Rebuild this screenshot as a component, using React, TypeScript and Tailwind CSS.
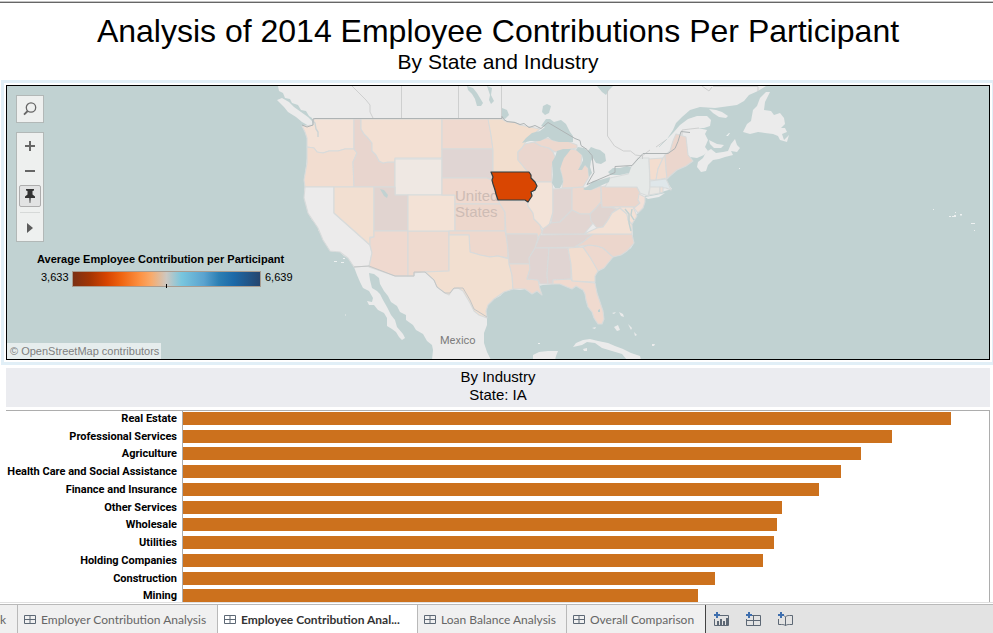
import React from "react";

type Region = { name: string; fill: string; points: string };

const LAND = "#ebebeb";
const WATER = "#c1d2d2";

const mainland =
  "278,86 279,91 283,93 285,98 290,99 292,103 298,105 301,110 306,111 309,116 312,118 314,123 311,125 302,126 305,132 307,138 307,147 307,158 306,167 305,174 304,180 305,187 304,191 304,198 308,206 308,213 312,220 318,225 318,230 321,234 323,240 330,247 330,251 335,252 340,252 344,256 348,258 352,262 354,267 357,275 360,282 363,288 369,291 373,298 372,302 367,301 369,305 374,305 378,310 384,313 387,318 387,326 392,329 396,332 399,337 402,340 405,338 403,334 397,327 395,320 391,315 387,307 383,300 380,294 377,291 372,288 370,280 369,273 374,274 379,278 380,284 384,291 388,296 391,302 397,306 400,312 406,315 406,320 413,325 416,330 423,334 427,341 432,345 433,350 432,360 491,360 487,352 484,343 484,333 487,325 487,318 486,311 488,305 494,299 500,296 504,292 513,289 520,290 525,289 528,291 532,294 537,291 542,295 540,289 538,286 543,285 553,284 560,284 567,287 572,289 576,286 583,290 585,294 586,300 588,307 592,312 594,318 598,324 602,324 604,319 603,311 600,302 597,293 595,283 595,276 598,271 604,268 609,261 614,256 621,255 627,251 631,248 634,243 632,238 633,235 632,225 633,218 638,213 643,208 645,200 645,196 656,194 665,191 672,189 669,185 666,183 666,179 670,176 677,170 686,166 693,161 690,157 697,158 704,155 708,151 705,147 708,140 705,134 707,130 698,128 704,128 710,126 711,120 707,116 697,116 688,119 680,125 673,133 667,139 673,130 676,123 682,117 690,110 700,107 715,108 737,105 744,101 749,95 758,91 766,86";

const islands = [
  "277,100 282,98 289,102 294,107 301,112 308,117 312,121 313,125 309,126 302,122 296,117 288,112 284,107",
  "697,167 698,162 703,158 706,152 711,149 716,153 723,152 728,151 731,144 735,139 737,145 740,148 737,152 731,151 733,155 725,157 719,159 713,160 708,165 706,171 701,172",
  "709,140 713,142 717,144 724,145 721,148 714,148 710,144",
  "709,109 716,110 722,112 728,116 726,118 719,117 713,113",
  "743,132 747,124 751,121 753,110 757,106 760,98 766,92 770,92 765,102 764,110 771,111 774,115 780,113 784,118 785,124 781,128 785,128 787,132 782,134 784,140 789,135 787,142 780,140 778,136 773,134 765,133 758,132 750,134",
  "645,197 656,195 665,193 659,197 648,199",
  "573,347 576,343 583,340 590,339 598,341 608,343 615,346 623,349 631,353 640,356 641,360 627,360 622,354 612,351 602,348 595,343 587,342 582,345",
  "533,360 533,355 539,352 548,351 558,351 556,356 555,360",
  "583,349 587,348 587,351 584,351",
  "614,327 618,325 620,330 617,331",
  "612,313 616,312 614,314",
  "619,312 623,314 624,317 621,316",
  "628,324 632,328 631,330",
  "634,332 637,335 635,336",
  "652,344 655,344 654,346 652,346",
  "345,314 346,315 345,316",
  "592,328 596,327 595,329",
];

const states: Region[] = [
  { name: "Washington", fill: "#f3e2d7", points: "302,126 313,125 314,119 354,119 354,149 345,149 338,151 329,151 323,153 317,152 314,148 307,147 307,138 305,132" },
  { name: "Oregon", fill: "#f2ddd0", points: "307,147 314,148 317,152 323,153 329,151 338,151 345,149 354,149 357,153 353,162 354,187 305,187 304,180 307,163" },
  { name: "California", fill: "#ecebeb", points: "305,187 334,187 334,213 370,245 372,253 369,266 354,267 348,258 340,252 330,251 323,240 318,228 308,213 304,198" },
  { name: "Idaho", fill: "#e8d5ce", points: "354,119 361,119 361,129 364,134 368,138 372,143 372,151 376,155 379,161 383,163 388,162 395,162 395,187 354,187 353,162 357,153 354,149" },
  { name: "Montana", fill: "#f3e0d3", points: "361,119 442,119 442,158 395,158 395,162 388,162 383,163 379,161 376,155 372,151 372,143 368,138 364,134 361,129" },
  { name: "Wyoming", fill: "#efe8e3", points: "395,159 442,159 442,195 395,195" },
  { name: "Nevada", fill: "#f2dfd1", points: "334,187 374,187 374,237 370,237 370,245 334,213" },
  { name: "Utah", fill: "#e1d4d0", points: "374,187 395,187 395,195 408,195 408,231 374,231" },
  { name: "Arizona", fill: "#efd9cf", points: "374,231 408,231 408,276 395,276 369,267 372,253 370,245 370,238 374,237" },
  { name: "New Mexico", fill: "#efdacf", points: "408,231 449,231 449,271 422,272 414,273 414,276 408,276" },
  { name: "Colorado", fill: "#f3e2d6", points: "408,195 455,195 455,231 408,231" },
  { name: "North Dakota", fill: "#efd9cf", points: "442,119 489,119 491,135 493,149 442,149" },
  { name: "South Dakota", fill: "#e0d5d3", points: "442,149 493,149 493,173 492,180 487,178 442,178" },
  { name: "Nebraska", fill: "#efd9cf", points: "442,178 487,178 492,180 496,190 500,204 455,204 455,195 442,195" },
  { name: "Kansas", fill: "#edd7cc", points: "455,204 500,204 505,212 505,231 455,231" },
  { name: "Oklahoma", fill: "#eed8cd", points: "449,231 505,231 508,245 508,258 498,256 490,257 480,255 470,252 469,235 449,235" },
  { name: "Texas", fill: "#f2dfd0", points: "449,235 469,235 470,252 480,255 490,257 498,256 509,259 512,275 513,289 504,292 494,299 488,305 486,311 487,318 479,315 474,311 470,303 463,291 458,288 453,289 449,295 445,293 437,287 434,280 425,272 449,271" },
  { name: "Minnesota", fill: "#f2dece", points: "488,119 502,119 507,122 514,122 520,125 530,127 540,129 531,136 525,143 522,148 518,152 518,160 523,166 528,172 493,172 493,150 491,135" },
  { name: "Wisconsin", fill: "#ead6ce", points: "525,144 534,142 541,146 549,148 553,152 555,157 552,167 552,182 534,182 530,176 528,172 523,166 518,160 518,152 522,148" },
  { name: "Upper Michigan", fill: "#edd8ce", points: "534,142 547,138 555,141 567,141 577,145 577,148 565,150 555,152 549,148 541,146" },
  { name: "Michigan", fill: "#edd8ce", points: "570,149 577,150 582,155 581,164 580,168 585,165 588,168 589,177 583,187 562,188 563,180 560,168 563,157" },
  { name: "Missouri", fill: "#eed8cd", points: "498,200 527,201 528,206 533,213 534,219 540,225 542,232 538,238 537,234 506,234 505,212 500,204" },
  { name: "Illinois", fill: "#f3e3d8", points: "530,199 537,186 534,182 552,182 553,190 553,212 550,222 548,229 543,229 540,225 534,219 533,213 528,206 528,202" },
  { name: "Indiana", fill: "#e1d5d2", points: "553,189 572,188 572,210 565,217 560,222 551,223 553,212" },
  { name: "Ohio", fill: "#edd8ce", points: "572,188 583,187 590,190 601,186 601,202 596,208 590,214 580,214 572,210" },
  { name: "Kentucky", fill: "#e2d5d1", points: "542,234 543,229 551,223 560,222 565,217 572,210 580,214 590,214 594,222 584,234" },
  { name: "West Virginia", fill: "#e0d4d0", points: "601,202 602,207 610,207 617,209 612,213 608,220 603,227 597,228 591,221 590,214 596,208" },
  { name: "Pennsylvania", fill: "#ecd6cc", points: "601,187 605,186 637,187 640,193 638,200 640,203 636,207 602,207" },
  { name: "Tennessee", fill: "#e0d4d1", points: "540,235 593,234 583,242 575,247 535,248" },
  { name: "Arkansas", fill: "#e0d4d0", points: "506,234 537,234 538,238 535,248 529,258 530,264 509,264 508,250" },
  { name: "Louisiana", fill: "#eed8cd", points: "509,264 530,264 530,269 527,279 538,280 540,289 542,295 537,291 532,294 528,291 525,289 513,289 512,275" },
  { name: "Mississippi", fill: "#e0d4d2", points: "535,248 549,248 547,275 548,284 540,284 538,280 527,279 530,269 529,258" },
  { name: "Alabama", fill: "#e0d4d2", points: "549,248 568,248 571,264 571,279 553,280 553,284 548,284 547,275" },
  { name: "Georgia", fill: "#f2ddcf", points: "568,248 583,247 590,257 597,268 598,271 595,276 595,282 572,281 571,264" },
  { name: "Florida", fill: "#f0dacf", points: "553,280 571,279 572,281 595,283 597,293 600,302 603,311 604,319 602,324 598,324 594,318 592,312 588,307 586,300 585,294 583,290 576,286 572,289 567,287 560,284 553,284" },
  { name: "South Carolina", fill: "#eed8ce", points: "583,247 589,245 597,246 603,248 613,257 604,268 598,271 590,257" },
  { name: "North Carolina", fill: "#ecd6cc", points: "575,247 583,242 593,234 632,234 634,243 627,251 621,255 613,257 603,248 597,246 589,245" },
  { name: "Virginia", fill: "#f3e1d5", points: "584,234 597,228 603,227 608,220 612,213 620,208 627,214 628,220 632,225 632,234" },
  { name: "Maryland", fill: "#f3e1d6", points: "610,207 633,207 637,216 632,224 628,220 627,214 620,208 617,209" },
  { name: "New Jersey", fill: "#f3e1d8", points: "639,194 645,197 645,202 643,208 638,213 634,208 640,203 638,200" },
  { name: "New York", fill: "#e6e9e8", points: "605,187 610,178 628,174 631,167 638,158 649,158 650,187 648,196 640,193 637,187" },
  { name: "Vermont", fill: "#f3ddcf", points: "649,159 663,158 658,169 656,180 650,180" },
  { name: "New Hampshire", fill: "#f1ddd1", points: "663,158 665,155 666,168 667,178 656,180 658,169" },
  { name: "Maine", fill: "#ebd6cd", points: "665,155 670,151 673,141 676,134 680,135 686,137 688,155 693,161 686,166 677,170 670,176 667,179 666,168" },
  { name: "Massachusetts", fill: "#dfe7ea", points: "650,181 666,179 668,183 671,190 666,188 650,187" },
  { name: "Connecticut", fill: "#e9e7e3", points: "650,187 660,187 660,193 649,195" },
  { name: "Rhode Island", fill: "#f0e0d6", points: "660,187 663,187 663,192 660,193" },
];

const lakes = [
  "522,143 526,138 532,133 540,131 545,127 541,126 546,119 550,119 554,122 561,120 566,124 570,132 573,136 573,142 566,142 559,142 552,140 548,137 540,141 530,141",
  "552,162 555,157 557,151 563,149 571,149 568,153 564,158 562,163 560,169 562,176 563,182 560,188 555,188 552,183 553,175",
  "578,147 584,148 588,151 591,147 596,149 600,150 605,154 606,161 601,164 596,163 593,158 591,161 590,167 592,173 589,177 588,168 585,165 582,170 578,170 581,165 583,160 582,155 576,150",
  "583,189 588,186 593,181 600,180 610,177 609,182 600,186 591,190 585,190",
  "608,172 613,168 620,168 627,166 631,167 629,173 620,175 611,175",
  "467,86 473,88 477,93 480,98 483,103 481,106 477,106 475,99 472,94 468,90",
  "487,86 492,88 491,95 494,101 491,104 489,100 490,95",
  "502,108 507,110 509,115 505,119 502,118",
  "543,106 547,104 551,106 549,113 545,115 542,112",
  "597,86 613,86 609,90 606,95 602,92",
  "380,189 384,190 388,195 387,198 384,196",
  "598,310 600,309 600,312 598,312",
];

const contributions = [
  { industry: "Real Estate", value: 768 },
  { industry: "Professional Services", value: 709 },
  { industry: "Agriculture", value: 678 },
  { industry: "Health Care and Social Assistance", value: 658 },
  { industry: "Finance and Insurance", value: 636 },
  { industry: "Other Services", value: 599 },
  { industry: "Wholesale", value: 594 },
  { industry: "Utilities", value: 591 },
  { industry: "Holding Companies", value: 580 },
  { industry: "Construction", value: 532 },
  { industry: "Mining", value: 515 },
];
const AXIS_MAX = 806;

function ContributionMap() {
  return (
    <svg
      className="block h-full w-full"
      viewBox="7 86 982 273"
      preserveAspectRatio="xMidYMid slice"
      role="img"
      aria-label="Map of average employee contribution by state"
    >
      <rect x="-500" y="0" width="2000" height="500" fill={WATER} />
      <polygon points={mainland} fill={LAND} />
      {islands.map((p) => (
        <polygon key={p} points={p} fill={LAND} />
      ))}
      <g stroke="#d8dbdb" strokeWidth="1.1" strokeLinejoin="round">
        {states.map((s) => (
          <polygon key={s.name} points={s.points} fill={s.fill} />
        ))}
      </g>
      {lakes.map((p) => (
        <polygon key={p} points={p} fill={WATER} />
      ))}
      <g fill="none" stroke={WATER} strokeWidth="1.4">
        <path d="M312 120l3 3 1 6 2 3v5" stroke="#ccd4d5" />
        <path d="M625 209l4 5v9l2 8M632 209l-1 6 3 5" />
        <path d="M667 139l-8 8" strokeWidth="0.8" />
      </g>
      <g fill="none" stroke="#c6c8c8" strokeWidth="0.8">
        <path d="M352 86l5 5 5 5 4 4 4 5v7l3 6M401.500 86v32M458.500 86v32M501.500 86v32" />
        <path d="M607.500 90v46l7 10 9 5 7 0 5 4 7 1 0 3M713 86.500h45v5M702 86l7 5 3-4" />
        <path d="M642 156l8-6M656 147l10-7M682 135v-5l8-1 9-1" />
      </g>
      <g fill="none" stroke="#aeb3b4" strokeWidth="1">
        <path d="M302 125l5 2 6-2v-6l2-0.500h187v-2l2 3 3 2 8 1 5 2 4-1 5 4 6-2 6 3 7-6 27 16 5 2 1 5 6 4 5 6 2 17-7 12 28-12v-6l17-1 11-12h25l7-5 3-7 3-10 9 1" />
        <path d="M354 267l15-1 26 10h19v-4h11l9 8 3 7 8 6 5 0 4-5h9l7 12 4 9 13 8" stroke="#c4c6c6" />
      </g>
      <g fill="#eef1f1">
        <path d="M949 216h2v1h-2zM952 216h4v1h-4zM954 215h2v1h-2zM960 214h2v1.500h-2zM955 212h1v1h-1zM971 223h4v1h-4zM933 209h1v1h-1zM974 230h1v1h-1zM739 168h1v1h-1zM334 261h3v1h-3zM341 262h3v1h-3zM343 258h2v1h-2z" />
        <path d="M726 136h2l2-3h-1zM506 341l2 1zM538 343h2v1h-2zM611 334l2 2zM640 338l2 3z" />
      </g>
      <g fill="#cdbcb5" fontFamily="'Liberation Sans', Arial, sans-serif" fontSize="15">
        <text x="455" y="201">United</text>
        <text x="455" y="217">States</text>
      </g>
      <text x="440" y="344" fontFamily="Roboto, 'Liberation Sans', sans-serif" fontSize="11" fill="#7d7d7d">
        Mexico
      </text>
      <polygon
        points="491,172 529,172 531,175 531,178 535,182 537,186 535,190 531,192 532,196 530,199 528,202 525,200 498,200 496,194 495,190 493,184 492,180 493,177"
        fill="#d94602"
        stroke="#333c3f"
        strokeWidth="1.200"
        strokeLinejoin="round"
      />
    </svg>
  );
}

function SearchIcon() {
  return (
    <svg width="14" height="14" viewBox="0 0 14 14" fill="none" stroke="#666" strokeWidth="1.300">
      <circle cx="8" cy="5.500" r="4.700" />
      <path d="M4.700 9L1 12.700" strokeWidth="1.800" />
    </svg>
  );
}

function PinIcon() {
  return (
    <svg width="10" height="14" viewBox="0 0 10 14" fill="#333">
      <path d="M1 0h8v1.500L7.500 2v3.500L10 7.500V9H5.700L5.300 14h-.6L4.300 9H0V7.500l2.500-2V2L1 1.500z" />
    </svg>
  );
}

function MapTools() {
  return (
    <div className="absolute left-[9px] top-[9px] flex w-7 flex-col gap-[9px]">
      <button aria-label="Search" className="flex h-7 items-center justify-center border border-[#b2b8b7] bg-[#eef0ef]">
        <SearchIcon />
      </button>
      <div className="flex h-[110px] flex-col items-center border border-[#b2b8b7] bg-[#eef0ef]">
        <button aria-label="Zoom in" className="flex h-[26px] w-full items-center justify-center">
          <svg width="10" height="10" viewBox="0 0 10 10" fill="#666">
            <path d="M4 0h2v4h4v2H6v4H4V6H0V4h4z" />
          </svg>
        </button>
        <button aria-label="Zoom out" className="flex h-6 w-full items-center justify-center">
          <svg width="10" height="2" viewBox="0 0 10 2" fill="#666">
            <path d="M0 0h10v2H0z" />
          </svg>
        </button>
        <button
          aria-label="Pin map"
          className="mt-0.5 flex h-[22px] w-[22px] shrink-0 items-center justify-center rounded-[2px] border border-[#adadad] bg-[#e2e3e3]"
        >
          <PinIcon />
        </button>
        <div className="mt-[5px] h-px w-5 shrink-0 bg-[#d6d9d8]" />
        <button aria-label="More map tools" className="flex w-full flex-1 items-center justify-center pt-px">
          <svg width="6" height="10" viewBox="0 0 6 10" fill="#5c5c5c">
            <path d="M0 0l6 5-6 5z" />
          </svg>
        </button>
      </div>
    </div>
  );
}

function ColorLegend() {
  return (
    <div className="absolute left-[30px] top-[166px] text-[11px] leading-[14px] text-black">
      <div className="font-bold">Average Employee Contribution per Participant</div>
      <div className="mt-1 flex items-start gap-1 pl-1">
        <span className="w-7">3,633</span>
        <div className="relative -ml-px mt-px h-4 w-[189px] border border-[#a99c90] bg-[linear-gradient(to_right,#7b3014,#a33403_9%,#d74401_18%,#f06511_26%,#fd9243_36%,#f8ab6c_42%,#ccc8c2_50%,#79c6de_58%,#5ba3cf_70%,#2c7fb4_78%,#1c69a8_86%,#26456e)]">
          <div className="absolute left-[93px] top-3 h-1 w-px bg-black" />
        </div>
        <span>6,639</span>
      </div>
    </div>
  );
}

function DashboardIcon() {
  return (
    <svg className="shrink-0" width="12" height="9" viewBox="0 0 12 9" fill="none" stroke="#5d6875">
      <path d="M.5.5h11v8H.5zM6 .5v8M.5 4.500h11" />
    </svg>
  );
}

function SheetTab({
  label,
  width,
  active = false,
  last = false,
}: {
  label: string;
  width: string;
  active?: boolean;
  last?: boolean;
}) {
  return (
    <button
      role="tab"
      aria-selected={active}
      className={
        "flex shrink-0 items-center gap-[5px] border-r pt-px pl-1.5 text-left whitespace-nowrap " +
        width +
        (last ? " border-[#444]" : " border-[#b9b9b9]") +
        (active ? " bg-white font-bold text-[#333]" : " bg-[#f0f0f0] text-[#666]")
      }
    >
      <DashboardIcon />
      {label}
    </button>
  );
}

function NewSheetButtons() {
  return (
    <div className="flex items-center gap-4 pl-[7px]">
      <button aria-label="New worksheet">
        <svg width="16" height="14" viewBox="0 0 16 14" fill="none" stroke="#5d6875">
          <path d="M1.500 7v6.500h14v-10H7" />
          <path d="M5 13V9M8 13V7M11 13V9M14 13V6" strokeWidth="2" />
          <path d="M4 0v6M1 3h6" stroke="#3f6fae" strokeWidth="2" />
        </svg>
      </button>
      <button aria-label="New dashboard">
        <svg width="16" height="14" viewBox="0 0 16 14" fill="none" stroke="#5d6875">
          <path d="M1.500 7v6.500h14v-10H7M8.500 3.500v10M1.500 8.500h14" />
          <path d="M4 0v6M1 3h6" stroke="#3f6fae" strokeWidth="2" />
        </svg>
      </button>
      <button aria-label="New story">
        <svg width="16" height="14" viewBox="0 0 16 14" fill="none" stroke="#5d6875">
          <path d="M1.500 7v5.500h3c2 0 3 .3 4 1.200 1-.9 2-1.200 4-1.200h3v-9h-3c-2 0-3 .3-4 1.500v8.700M7 3.500l1.500 1.500" />
          <path d="M4 0v6M1 3h6" stroke="#3f6fae" strokeWidth="2" />
        </svg>
      </button>
    </div>
  );
}

export default function App() {
  return (
    <div className="flex h-screen flex-col overflow-hidden bg-white font-['Liberation_Sans',Arial,sans-serif] text-black">
      <div className="mt-px h-0.5 shrink-0 border-b border-[#666] bg-[#c4c4c4]" />
      <header className="h-[77px] shrink-0 pt-2 pl-[3px] text-center">
        <h1 className="text-[32px] leading-10">Analysis of 2014 Employee Contributions Per Participant</h1>
        <h2 className="text-[21px] leading-[22px]">By State and Industry</h2>
      </header>

      <section className="-mr-0.5 ml-px shrink-0 border-[3px] border-[#e1eff7] p-0.5">
        <div className="relative h-[275px] border border-black">
          <ContributionMap />
          <MapTools />
          <ColorLegend />
          <a
            href="#copyright"
            className="absolute bottom-0 left-0 bg-white/60 pr-0.5 pl-[3px] text-[11px] leading-4 text-[#808080]"
          >
            © OpenStreetMap contributors
          </a>
        </div>
      </section>

      <section className="mt-[3px] mr-[3px] ml-[6px] flex min-h-0 flex-1 flex-col">
        <h3 className="h-[39px] shrink-0 bg-[#ebecf0] text-center text-[15px] leading-[18px]">
          By Industry
          <br />
          State: IA
        </h3>
        <div className="mt-[3px] min-h-0 flex-1 overflow-hidden border-t border-r border-[#adadad]">
          <div className="grid h-[195px] grid-cols-[176px_1fr] grid-rows-11">
            {contributions.map((row) => (
              <React.Fragment key={row.industry}>
                <div className="pr-[5px] text-right font-[Roboto,'Liberation_Sans',sans-serif] text-[11px] leading-[15px] font-bold whitespace-nowrap">
                  {row.industry}
                </div>
                <div className="border-l border-[#adadad] pt-px">
                  <div className="h-[13px] bg-[#cc711d]" style={{ width: `${(row.value / AXIS_MAX) * 100}%` }} />
                </div>
              </React.Fragment>
            ))}
          </div>
        </div>
      </section>

      <footer className="shrink-0 border-t border-[#e0e0e0] pt-px">
        <div
          role="tablist"
          className="flex h-[29px] border-t border-[#b9b9b9] bg-[#e3e3e3] font-[Lato,'Open_Sans',sans-serif] text-[12px]"
        >
          <button role="tab" aria-selected={false} className="w-[18px] shrink-0 border-r border-[#b9b9b9] bg-[#f0f0f0] pt-px pr-3 text-right text-[#666]">
            k
          </button>
          <SheetTab label="Employer Contribution Analysis" width="w-[200px]" />
          <SheetTab label="Employee Contribution Anal..." active width="w-[200px]" />
          <SheetTab label="Loan Balance Analysis" width="w-[149px]" />
          <SheetTab label="Overall Comparison" width="w-[139px]" last />
          <NewSheetButtons />
        </div>
      </footer>
    </div>
  );
}
